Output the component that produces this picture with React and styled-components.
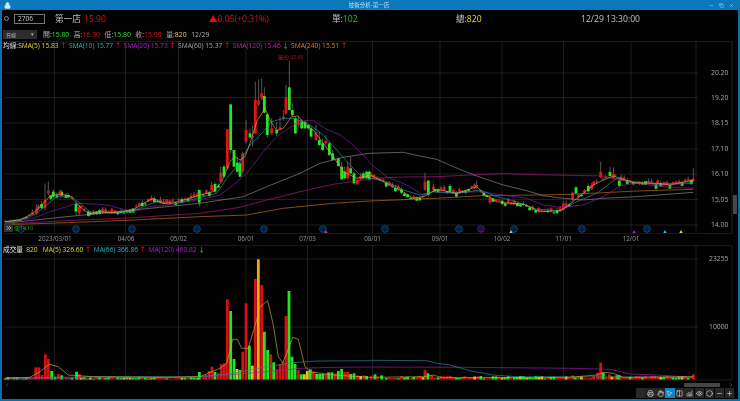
import React from "react";
import styled, { createGlobalStyle } from "styled-components";
import {
  Lock, Minus, Copy, X, File, Printer, Hand, MousePointer2, Columns2,
  ChartNoAxesCombined, Eye, Circle, Plus, ChevronsRight, ChevronLeft, ChevronRight,
} from "lucide-react";

const FONT = `"Open Sans", "Noto Sans CJK TC", sans-serif`;
const RED = "#e01414";
const GREEN = "#25e625";
const YELLOW = "#e6da30";

const GlobalStyle = createGlobalStyle`
  html, body { margin: 0; padding: 0; background: #000; }
  body { font-family: ${FONT}; overflow: hidden; }
`;

const Window = styled.div`
  width: 740px;
  height: 401px;
  box-sizing: border-box;
  display: flex;
  flex-direction: column;
  background: #020202;
  border-left: 2px solid #0b6ea8;
  border-right: 2px solid #0b6ea8;
  border-bottom: 2px solid #0b6ea8;
  filter: blur(0.2px);
`;

const TitleBar = styled.div`
  height: 10px;
  margin-left: -2px;
  margin-right: -2px;
  flex: none;
  display: flex;
  align-items: center;
  justify-content: space-between;
  padding: 0 4px;
  background: #0b78ba;
  color: #bfe3f5;
`;

const Title = styled.span`
  font-size: 5.5px;
  line-height: 10px;
  margin-left: 18px;
`;

const WinButtons = styled.div`
  display: flex;
  gap: 5px;
  margin-right: 2px;
`;

const Header = styled.div`
  height: 17px;
  flex: none;
  display: grid;
  grid-template-columns: 10px 41px 29px 125px 123px 124px 125px auto;
  align-items: center;
  padding-left: 2px;
  font-size: 8.6px;
  color: #c4c4c4;
`;

const RadioDot = styled.span`
  width: 5px;
  height: 5px;
  border: 1px solid #888;
  border-radius: 50%;
  box-sizing: border-box;
`;

const CodeBox = styled.div`
  width: 31px;
  height: 10px;
  box-sizing: border-box;
  border: 1px solid #777;
  font-size: 6.6px;
  line-height: 8px;
  padding-left: 3px;
  color: #ccc;
`;

const Value = styled.span`
  color: ${(p) => p.$color || "inherit"};
`;

const InfoRow = styled.div`
  height: 14px;
  flex: none;
  display: flex;
  align-items: center;
  padding-left: 1px;
  gap: 4.5px;
  font-size: 6.9px;
  color: #b0b0b0;
`;

const PeriodSelect = styled.div`
  width: 34px;
  height: 9px;
  margin-right: 1.5px;
  box-sizing: border-box;
  display: flex;
  align-items: center;
  justify-content: space-between;
  padding: 0 3px;
  background: #2c2c2c;
  font-size: 5px;
  color: #bbb;
`;

const ChartPanel = styled.div`
  position: relative;
  height: 204px;
  flex: none;
`;

const Legend = styled.div`
  position: absolute;
  top: 0;
  left: 1px;
  display: flex;
  gap: 2.1px;
  font-size: 6.7px;
  font-weight: 500;
  line-height: 9px;
  white-space: nowrap;
  color: #c4c4c4;
`;

const LegendLabel = styled.span`
  margin-right: ${(p) => p.$trim}px;
`;

const LegendItem = styled.span`
  color: ${(p) => p.$color};
`;

const Arrow = styled.span`
  margin-left: 1.5px;
  color: ${(p) => (p.$up ? "#e02020" : "#20c020")};
`;

const VolumePanel = styled.div`
  position: relative;
  height: 136px;
  flex: none;
`;

const Drawing = styled.svg`
  display: block;
  width: 736px;
  height: 100%;
`;

const ExpandButton = styled.div`
  position: absolute;
  left: 2px;
  top: 182px;
  display: flex;
  align-items: center;
  gap: 1px;
  font-size: 5px;
  color: #20b020;
`;

const ExpandIcon = styled.span`
  width: 9px;
  height: 9px;
  display: flex;
  align-items: center;
  justify-content: center;
  background: #333;
  color: #ddd;
`;

const ScrollRow = styled.div`
  height: 7px;
  flex: none;
  display: flex;
  align-items: center;
  padding: 0 4px 0 2px;
  color: #888;
`;

const ScrollGrip = styled.div`
  width: 36px;
  height: 4px;
  margin-left: auto;
  margin-right: 8px;
  background: #454545;
`;

const Toolbar = styled.div`
  height: 11px;
  flex: none;
  display: flex;
  justify-content: flex-end;
  align-items: flex-start;
  gap: 0.5px;
  padding-right: 4px;
`;

const ToolButton = styled.div`
  width: 9.4px;
  height: 10px;
  display: flex;
  align-items: center;
  justify-content: center;
  background: ${(p) => (p.$active ? "#0d86c8" : "#262626")};
  color: ${(p) => (p.$dim ? "#3a3a3a" : "#e0e0e0")};
`;

// ---- data, points read off the chart at 3x: panel A starts at x=0, panel B at x=370 ----

const toA = (p, base) => p.map(([x, y]) => [x / 3, base + y / 3]);
const toB = (p, base) => p.map(([x, y]) => [370 + x / 3, base + y / 3]);
const line = (a, b, base = 50) => [...toA(a, base), ...toB(b, base)];

const sma5 = line(
  [[15,515],[60,510],[100,490],[130,460],[150,438],[180,432],[210,438],[230,460],[250,480],[270,490],[300,485],[340,488],[400,480],[430,460],[460,445],[490,460],[520,458],[560,448],[600,435],[640,425],[665,395],[690,335],[705,320],[720,330],[735,320],[750,280],[770,215],[795,175],[810,210],[830,242],[850,235],[875,200],[895,198],[915,225],[940,240],[970,280],[1000,320],[1030,365],[1070,385],[1108,378]],
  [[0,375],[40,395],[90,420],[130,445],[160,440],[200,418],[260,430],[320,410],[340,430],[380,455],[420,460],[460,462],[510,485],[570,482],[590,470],[640,430],[670,405],[700,390],[730,378],[790,398],[860,400],[900,405],[970,390]]
);
const sma10 = line(
  [[15,515],[80,505],[110,490],[140,465],[170,440],[215,440],[240,460],[270,485],[330,490],[400,483],[430,470],[470,455],[500,462],[540,458],[590,445],[650,430],[680,385],[710,350],[750,285],[790,245],[815,215],[850,205],[885,205],[930,225],[970,255],[1010,300],[1050,345],[1080,375],[1108,385]],
  [[0,385],[50,395],[100,420],[150,435],[190,425],[260,430],[330,420],[380,440],[440,455],[500,478],[570,482],[620,455],[680,430],[740,385],[800,398],[870,402],[970,398]]
);
const sma20 = line(
  [[15,517],[100,505],[150,485],[200,470],[230,460],[280,462],[320,465],[370,478],[400,485],[450,470],[500,465],[560,455],[620,445],[660,435],[700,405],[740,370],[790,305],[830,260],[870,232],[900,212],[940,212],[980,238],[1020,255],[1060,285],[1108,335]],
  [[0,340],[50,380],[110,405],[160,435],[190,425],[250,428],[330,425],[400,435],[470,445],[520,465],[570,472],[640,465],[700,440],[750,408],[800,398],[870,405],[970,400]]
);
const sma60 = line(
  [[15,520],[200,500],[300,490],[400,480],[500,470],[600,460],[730,440],[800,410],[900,370],[960,340],[1030,322],[1108,310]],
  [[0,310],[100,307],[150,318],[200,328],[250,350],[320,378],[400,405],[470,422],[520,437],[580,445],[640,450],[700,445],[800,440],[970,427]]
);
const sma120 = line(
  [[15,522],[200,512],[400,503],[600,490],[720,472],[800,450],[900,425],[1000,403],[1108,388]],
  [[0,385],[100,381],[200,380],[300,375],[400,371],[500,374],[600,376],[700,378],[750,390],[800,400],[880,410],[970,415]]
);
const sma240 = line(
  [[15,524],[200,518],[400,510],[600,500],[740,495],[850,475],[1000,460],[1108,453]],
  [[0,453],[200,445],[330,437],[500,435],[600,433],[700,428],[800,423],[970,418]]
);

const volMa5 = line(
  [[15,415],[90,412],[120,395],[148,373],[175,380],[205,405],[280,410],[500,412],[600,410],[660,385],[680,370],[698,298],[712,298],[725,325],[745,325],[770,240],[780,200],[803,182],[820,255],[835,350],[848,368],[860,340],[878,292],[895,298],[915,380],[930,395],[1000,405],[1108,412]],
  [[160,410],[190,405],[215,413],[600,412],[680,405],[700,397],[730,400],[760,412],[970,410]],
  240
);
const volMa66 = line(
  [[15,415],[300,410],[600,410],[700,400],[800,380],[880,368],[950,363],[1108,362]],
  [[0,361],[170,362],[200,370],[240,375],[300,392],[370,405],[440,410],[970,412]],
  240
);
const volMa120 = line(
  [[15,415],[600,412],[800,395],[900,385],[1000,382],[1108,381]],
  [[0,381],[280,382],[600,385],[720,388],[780,402],[860,405],[970,412]],
  240
);

// x, body top, body bottom, wick top, wick bottom, colour
const bigCandles = [
  [110,475,490,462,495,"r"],[135,450,475,400,480,"r"],[145,422,430,395,435,"r"],[160,425,440,418,445,"g"],
  [185,425,437,420,440,"g"],[205,435,442,430,445,"g"],[228,462,485,455,495,"g"],[238,470,490,465,495,"r"],
  [265,485,498,480,500,"g"],[598,420,458,418,470,"g"],[645,402,425,396,428,"g"],[635,405,422,395,425,"r"],
  [662,368,395,350,398,"r"],[672,350,380,345,385,"g"],
  [682,238,355,238,360,"r"],[692,163,300,163,310,"g"],[702,300,350,300,352,"g"],[712,338,365,320,368,"g"],
  [720,340,380,335,382,"g"],[728,310,365,305,370,"r"],[738,240,275,210,280,"r"],[750,250,262,235,265,"g"],
  [758,258,262,225,290,"r"],[766,150,250,95,252,"r"],[776,152,163,88,168,"r"],[785,130,145,85,150,"r"],
  [793,138,188,112,190,"g"],[802,193,255,190,262,"g"],[815,235,250,205,255,"r"],[830,240,250,215,258,"g"],
  [840,232,238,200,240,"r"],[850,200,205,180,212,"r"],[858,142,190,105,195,"r"],[868,112,180,33,182,"g"],
  [877,180,195,160,198,"g"],[886,205,250,200,252,"g"],[895,210,225,200,232,"r"],[905,215,235,208,238,"g"],
  [915,215,235,212,238,"g"],[925,225,235,222,240,"g"],[933,235,260,228,262,"g"],[948,248,270,225,272,"r"],
  [958,270,285,245,288,"g"],[968,280,300,265,302,"g"],[978,272,280,255,284,"r"],[988,280,315,275,318,"g"],
  [998,310,330,300,333,"g"],[1015,325,348,322,350,"g"],[1025,350,388,335,390,"g"],[1034,365,385,350,388,"g"],
  [1043,350,385,335,388,"r"],[1052,355,370,320,372,"g"],[1062,370,400,365,402,"g"],[1072,390,403,385,405,"r"],
  [1082,378,388,368,392,"r"],[1090,370,385,365,388,"g"],[1100,365,385,362,388,"g"],[1108,365,388,362,392,"g"],
].map(([x, t, b, wt, wb, c]) => [x / 3, 50 + t / 3, 50 + b / 3, 50 + wt / 3, 50 + wb / 3, c]);

const rightCandles = [
  [165,395,420,368,422,"r"],[175,392,435,390,440,"g"],[190,410,420,400,425,"r"],[240,408,425,402,428,"g"],
  [320,405,412,392,416,"r"],[360,442,458,435,462,"r"],[580,460,480,455,482,"r"],[608,428,448,425,455,"r"],
  [618,412,430,408,432,"g"],[655,408,424,400,428,"g"],[665,405,418,398,420,"r"],[692,365,382,335,385,"r"],
  [720,366,378,350,380,"g"],[730,372,385,352,388,"r"],[748,392,408,388,410,"g"],[858,402,416,398,422,"g"],
  [970,386,393,355,396,"r"],
].map(([x, t, b, wt, wb, c]) => [370 + x / 3, 50 + t / 3, 50 + b / 3, 50 + wt / 3, 50 + wb / 3, c]);

const interp = (path, x) => {
  for (let i = 1; i < path.length; i++) {
    if (x <= path[i][0]) {
      const [x0, y0] = path[i - 1];
      const [x1, y1] = path[i];
      return y0 + ((y1 - y0) * (x - x0)) / (x1 - x0 || 1);
    }
  }
  return path[path.length - 1][1];
};

const seeded = (seed) => () => {
  seed = (seed * 16807) % 2147483647;
  return seed / 2147483647;
};

const STEP = 3.05;
const SLOTS = Array.from({ length: 226 }, (_, i) => 5 + STEP * i);

const makeCandles = () => {
  const r = seeded(4711);
  const fixed = [...bigCandles, ...rightCandles];
  const out = [...fixed];
  SLOTS.forEach((x) => {
    const a = r(), b = r(), c = r(), d = r();
    if (x > 220 && x < 371) return;
    if (fixed.some((k) => Math.abs(k[0] - x) < 1.6)) return;
    if (x > 693) return;
    const calm = x < 30 ? 0.3 : 1;
    const mid = interp(sma5, x) + (a - 0.5) * 4 * calm;
    const h = (0.8 + b * 3.2) * calm;
    out.push([x, mid - h / 2, mid + h / 2, mid - h / 2 - c * 3 * calm, mid + h / 2 + d * 1.5 * calm, a > 0.5 ? "g" : "r"]);
  });
  return out;
};

// x, top at 3x, colour
const bigVolumes = [
  [107,382,"r"],[116,382,"r"],[126,405,"r"],[136,343,"r"],[145,357,"r"],[155,393,"g"],[165,410,"g"],[175,402,"r"],[185,406,"g"],[230,395,"g"],[238,402,"r"],
  [598,396,"g"],[617,405,"r"],[627,393,"r"],[636,380,"r"],[645,396,"g"],[655,400,"r"],[664,372,"r"],[673,370,"r"],
  [682,178,"r"],[692,213,"g"],[702,357,"g"],[711,387,"y"],[720,390,"g"],[728,335,"r"],[738,190,"r"],[748,317,"g"],[757,377,"y"],[766,117,"r"],[775,58,"o"],[785,135,"r"],[793,275,"g"],[803,330,"g"],[812,343,"r"],[821,367,"g"],[830,388,"r"],[840,372,"r"],[849,365,"r"],[858,228,"r"],[867,153,"g"],[876,350,"g"],[885,372,"g"],[895,390,"r"],[904,403,"g"],[913,403,"y"],[922,393,"y"],[931,388,"g"],[940,395,"r"],[950,402,"g"],[959,402,"g"],[968,402,"g"],[977,402,"r"],[986,397,"g"],[996,397,"g"],[1006,400,"r"],[1015,393,"g"],[1025,387,"g"],[1034,396,"r"],[1043,396,"r"],[1052,402,"g"],[1062,400,"g"],[1072,406,"r"],[1082,408,"y"],[1092,406,"r"],[1100,408,"g"],
].map(([x, t, c]) => [x / 3, 240 + t / 3, c]);

const rightVolumes = [
  [15,403,"g"],[35,406,"g"],[165,390,"r"],[174,400,"g"],[185,406,"r"],[285,409,"r"],[608,406,"r"],[683,398,"r"],[692,368,"r"],[700,398,"g"],[718,403,"r"],[740,406,"g"],[748,406,"g"],[970,403,"r"],
].map(([x, t, c]) => [370 + x / 3, 240 + t / 3, c]);

const makeVolumes = () => {
  const r = seeded(1993);
  const fixed = [...bigVolumes, ...rightVolumes];
  const out = [...fixed];
  SLOTS.forEach((x) => {
    const a = r(), b = r();
    if (x > 690) return;
    if (fixed.some((k) => Math.abs(k[0] - x) < 1.6)) return;
    if (x > 225 && x < 368) return;
    const h = x > 370 ? 1 + a * 2.6 : 0.8 + a * 1.8;
    out.push([x, 379.5 - h, b > 0.62 ? "g" : b > 0.16 ? "r" : "y"]);
  });
  return out;
};

const candles = makeCandles();
const volumes = makeVolumes();

const GRID_X = [54.5, 125.5, 178.5, 246, 307.5, 372.5, 440, 502, 563.5, 631, 696];
const PRICES = [["20.20", 73], ["19.20", 97.5], ["18.15", 123], ["17.10", 149], ["16.10", 174], ["15.05", 199.5], ["14.00", 225]];
const DATES = [["2023/03/01", 55], ["04/06", 126], ["05/02", 178.5], ["06/01", 246], ["07/03", 307.5], ["08/01", 372.5], ["09/01", 440], ["10/02", 502], ["11/01", 563.5], ["12/01", 631]];
const DIVIDENDS = [[21, ""], [76, "月"], [132, "月"], [197, "月"], [264, "月"], [323, "月"], [385, "月"], [459, "月"], [481, "息", "#7a10a8"], [514, "月"], [582, "月"], [647, "月"]];
const TRIANGLES = [[326, "#e020a0"], [511, "#bbbbbb"], [634, "#a020d0"], [665, "#20c8e0"], [681, "#e8e030"]];
const VOL_COLORS = { r: "#d41010", g: "#22e622", y: "#e8c020", o: "#f0a818" };

const MA_ITEMS = [
  ["SMA(5) 15.83", YELLOW, true],
  ["SMA(10) 15.77", "#28b4c4", true],
  ["SMA(20) 15.73", "#a824cc", true],
  ["SMA(60) 15.37", "#a4a4a4", true],
  ["SMA(120) 15.46", "#cc22a4", false],
  ["SMA(240) 15.51", "#dc8022", true],
];

const VOL_ITEMS = [
  ["MA(5) 326.60", YELLOW, true],
  ["MA(66) 366.86", "#28b4c4", true],
  ["MA(120) 460.82", "#a824cc", false],
];

const toPoints = (path) => path.map(([x, y]) => `${x.toFixed(1)},${y.toFixed(1)}`).join(" ");

const Line = ({ path, color }) => (
  <polyline points={toPoints(path)} fill="none" stroke={color} strokeWidth="0.65" strokeLinejoin="round" />
);

const PriceChart = () => (
  <Drawing viewBox="2 41 736 204">
    <line x1="4" x2="732" y1="41.5" y2="41.5" stroke="#3a1420" strokeWidth="0.7" />
    <line x1="4" x2="732" y1="233.5" y2="233.5" stroke="#3a1420" strokeWidth="0.7" />
    <line x1="732" x2="732" y1="41" y2="233" stroke="#303030" strokeWidth="0.7" />
    {GRID_X.map((x) => (
      <line key={x} x1={x} x2={x} y1="41" y2="233" stroke="#2a2a2a" strokeWidth="0.7" />
    ))}
    {PRICES.map(([label, y]) => (
      <g key={label}>
        <line x1="4" x2="698" y1={y} y2={y} stroke="#2a2a2a" strokeWidth="0.7" />
        <text x="711" y={y + 2.4} fontSize="6.8" fill="#a8a8a8" fontFamily={FONT}>{label}</text>
      </g>
    ))}
    {DATES.map(([label, x]) => (
      <text key={label} x={x} y="240.5" fontSize="6.3" textAnchor="middle" fill="#989898" fontFamily={FONT}>{label}</text>
    ))}
    {DIVIDENDS.map(([x, ch, color = "#0f5aa0"]) => (
      <g key={x}>
        <circle cx={x} cy="229" r="3.4" fill="#03101e" stroke={color} strokeWidth="0.7" />
        {ch && <text x={x} y="230.7" fontSize="4.6" textAnchor="middle" fill={color} fontFamily={FONT}>{ch}</text>}
      </g>
    ))}
    {TRIANGLES.map(([x, color]) => (
      <polygon key={x} points={`${x - 1.7},233 ${x + 1.7},233 ${x},230`} fill={color} />
    ))}
    <text x="278" y="59" fontSize="5" fill="#b01818" fontFamily={FONT}>最高: 20.60</text>
    {candles.map(([x, t, b, wt, wb, c], i) => (
      <g key={i}>
        <line x1={x} x2={x} y1={wt} y2={wb} stroke="#8c8c8c" strokeWidth="0.6" />
        <rect x={x - 1.4} y={t} width="2.8" height={Math.max(b - t, 0.8)} fill={c === "r" ? RED : GREEN} />
      </g>
    ))}
    <Line path={sma240} color="#c87020" />
    <Line path={sma120} color="#b01c80" />
    <Line path={sma60} color="#8c8c8c" />
    <Line path={sma20} color="#8a1cb4" />
    <Line path={sma10} color="#2398a8" />
    <Line path={sma5} color="#d8a848" />
    <rect x="733" y="195" width="4" height="19" fill="#484848" />
  </Drawing>
);

const VolumeChart = () => (
  <Drawing viewBox="2 245 736 136">
    <line x1="4" x2="732" y1="245.3" y2="245.3" stroke="#2a2a2a" strokeWidth="0.7" />
    <line x1="4" x2="732" y1="380" y2="380" stroke="#2a2a2a" strokeWidth="0.7" />
    <line x1="732" x2="732" y1="245" y2="380" stroke="#2a2a2a" strokeWidth="0.7" />
    {GRID_X.map((x) => (
      <line key={x} x1={x} x2={x} y1="245" y2="380" stroke="#2a2a2a" strokeWidth="0.7" />
    ))}
    <line x1="4" x2="698" y1="259" y2="259" stroke="#2a2a2a" strokeWidth="0.7" />
    <line x1="4" x2="698" y1="327" y2="327" stroke="#2a2a2a" strokeWidth="0.7" />
    <text x="709" y="261.4" fontSize="6.8" fill="#a8a8a8" fontFamily={FONT}>23255</text>
    <text x="709" y="329.4" fontSize="6.8" fill="#a8a8a8" fontFamily={FONT}>10000</text>
    {volumes.map(([x, t, c], i) => (
      <rect key={i} x={x - 1.4} y={t} width="2.8" height={379.5 - t} fill={VOL_COLORS[c]} />
    ))}
    <Line path={volMa120} color="#9a20c0" />
    <Line path={volMa66} color="#2a8c98" />
    <Line path={volMa5} color="#c8b040" />
  </Drawing>
);

const TOOLS = [File, Printer, Hand, MousePointer2, Columns2, ChartNoAxesCombined, Eye, Circle, Minus, Plus];

const App = () => (
  <>
    <GlobalStyle />
    <Window>
      <TitleBar>
        <Lock size={7} fill="#d8eef8" strokeWidth={1.5} />
        <Title>技術分析-第一店</Title>
        <WinButtons>
          <Minus size={5} />
          <Copy size={5} />
          <X size={5} />
        </WinButtons>
      </TitleBar>
      <Header>
        <RadioDot />
        <CodeBox>2706</CodeBox>
        <span>第一店</span>
        <Value $color={RED}>15.90</Value>
        <Value $color={RED}>▲0.05(+0.31%)</Value>
        <span>單:<Value $color="#22c822">102</Value></span>
        <span>總:<Value $color={YELLOW}>820</Value></span>
        <span>12/29 13:30:00</span>
      </Header>
      <InfoRow>
        <PeriodSelect>日線<span>▾</span></PeriodSelect>
        <span>開:<Value $color={GREEN}>15.80</Value></span>
        <span>高:<Value $color={RED}>16.30</Value></span>
        <span>低:<Value $color={GREEN}>15.80</Value></span>
        <span>收:<Value $color={RED}>15.90</Value></span>
        <span>量:<Value $color={YELLOW}>820</Value></span>
        <span>12/29</span>
      </InfoRow>
      <ChartPanel>
        <PriceChart />
        <Legend>
          <LegendLabel $trim={-2.1}>均線:</LegendLabel>
          {MA_ITEMS.map(([label, color, up]) => (
            <LegendItem key={label} $color={color}>
              {label}
              <Arrow $up={up}>{up ? "↑" : "↓"}</Arrow>
            </LegendItem>
          ))}
        </Legend>
        <ExpandButton>
          <ExpandIcon><ChevronsRight size={8} /></ExpandIcon>
          <span>低:14.10</span>
        </ExpandButton>
      </ChartPanel>
      <VolumePanel>
        <VolumeChart />
        <Legend>
          <LegendLabel $trim={1}>成交量</LegendLabel>
          <LegendLabel $trim={3}><LegendItem $color={YELLOW}>820</LegendItem></LegendLabel>
          {VOL_ITEMS.map(([label, color, up]) => (
            <LegendItem key={label} $color={color}>
              {label}
              <Arrow $up={up}>{up ? "↑" : "↓"}</Arrow>
            </LegendItem>
          ))}
        </Legend>
      </VolumePanel>
      <ScrollRow>
        <ChevronLeft size={6} />
        <ScrollGrip />
        <ChevronRight size={6} />
      </ScrollRow>
      <Toolbar>
        {TOOLS.map((Icon, i) => (
          <ToolButton key={i} $active={i === 3} $dim={i === 0}>
            <Icon size={7} strokeWidth={2} />
          </ToolButton>
        ))}
      </Toolbar>
    </Window>
  </>
);

export default App;
